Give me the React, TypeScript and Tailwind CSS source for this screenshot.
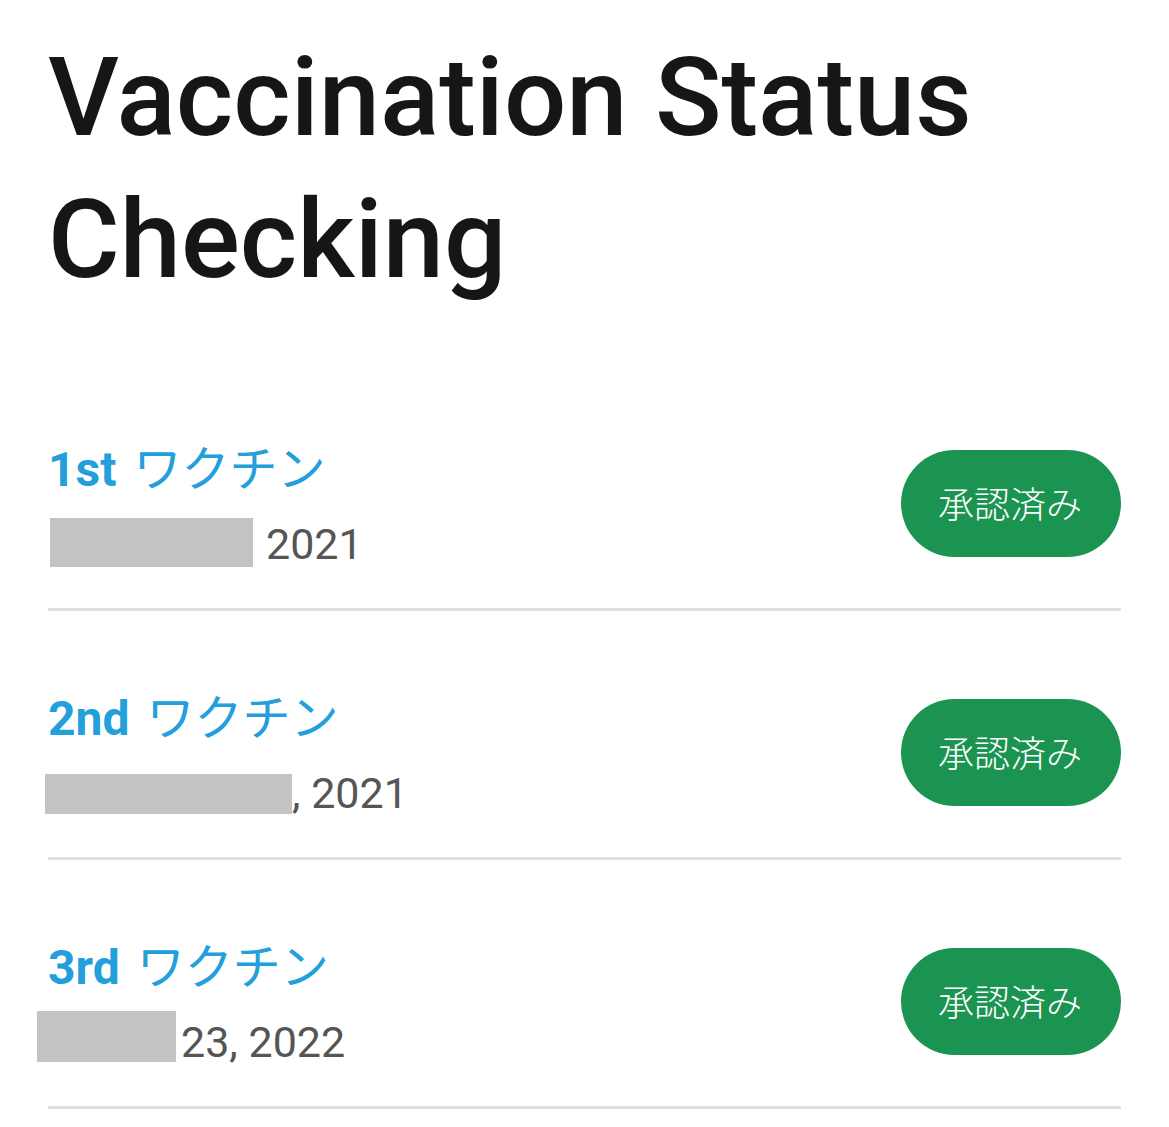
import React from "react";

type Row = {
  ord: string;
  grayClass: string;
  text: string;
};

const rows: Row[] = [
  { ord: "1st", grayClass: "w-[203px] h-[49px] ml-[2px] align-[-8px] mr-[13px]", text: "2021" },
  { ord: "2nd", grayClass: "w-[247px] h-[40px] -ml-[3px] align-[-6px]", text: ", 2021" },
  { ord: "3rd", grayClass: "w-[139px] h-[51px] -ml-[11px] align-[-5px] mr-[5px]", text: "23, 2022" },
];

function StatusRow({ r }: { r: Row }) {
  return (
    <div>
      <div className="flex items-center justify-between pt-[88px] pb-[51px]">
        <div className="flex h-[107px] flex-col justify-center pt-[3px]">
          <div className="whitespace-nowrap font-['Roboto','Noto_Sans_CJK_JP',sans-serif] text-[48px] leading-[75px] text-[#239fdb]">
            <span className="font-bold">{r.ord}</span>
            <span className="ml-[17px] font-['Noto_Sans_CJK_JP',sans-serif] font-normal">ワクチン</span>
          </div>
          <div className="whitespace-nowrap font-['Roboto',sans-serif] text-[43px] leading-[75px] text-[#555555]">
            <span className={`inline-block bg-[#c3c3c3] ${r.grayClass}`} />
            <span>{r.text}</span>
          </div>
        </div>
        <div className="flex h-[107px] w-[220px] items-center justify-center rounded-full bg-[#1a9450] pb-[3px] pr-[2px] font-['Noto_Sans_CJK_JP',sans-serif] text-[36px] font-light text-white">
          承認済み
        </div>
      </div>
      <div className="h-[3px] bg-[#e0e0e0]" />
    </div>
  );
}

export default function App() {
  return (
    <div className="min-h-[1127px] bg-white px-12 pt-[27px]">
      <h1 className="mb-[51px] font-['Roboto',sans-serif] text-[110px] font-medium leading-[142px] text-[#161616]">
        Vaccination Status Checking
      </h1>
      <div>
        {rows.map((r) => (
          <StatusRow key={r.ord} r={r} />
        ))}
      </div>
    </div>
  );
}
